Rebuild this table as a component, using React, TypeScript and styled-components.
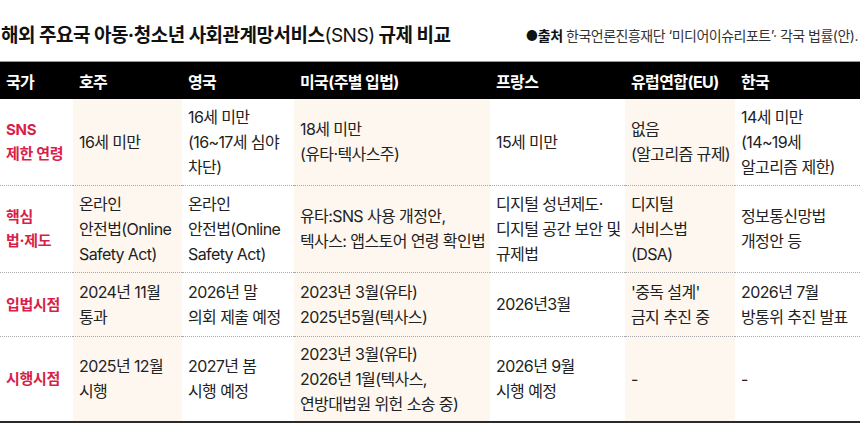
import React from "react";
import styled, { createGlobalStyle } from "styled-components";

const Global = createGlobalStyle`
  html, body { margin: 0; padding: 0; background: #ffffff; }
  body { font-family: Inter, "Noto Sans CJK KR", sans-serif; color: #222; }
`;

const Page = styled.div`
  width: 860px;
  height: 429px;
  overflow: hidden;
  background: #fff;
`;

const TitleBar = styled.div`
  height: 62px;
  display: flex;
  align-items: flex-end;
  justify-content: space-between;
  padding: 0 2px 13px 1px;
  box-sizing: border-box;
  border-bottom: 1px solid #9a9a9a;
`;

const Title = styled.h1`
  margin: 0;
  font-size: 19px;
  font-weight: 700;
  letter-spacing: -0.5px;
  line-height: 24px;
  color: #111;
`;

const Light = styled.span`
  font-weight: 400;
`;

const Source = styled.div`
  font-size: 14px;
  letter-spacing: -0.5px;
  line-height: 20px;
  color: #333;
  margin-bottom: 2px;
`;

const SourceLabel = styled.b`
  color: #111;
  font-weight: 700;
`;

const Grid = styled.div`
  display: grid;
  grid-template-columns: 73px 109px 112px 196px 135px 110px 125px;
  grid-template-rows: 37px 86px 87px 64px 85px;
  border-bottom: 2px solid #2a2a2a;
`;

const HeadCell = styled.div`
  background: #000;
  color: #fff;
  font-weight: 700;
  font-size: 16px;
  letter-spacing: -0.6px;
  display: flex;
  align-items: center;
  padding-left: 6px;
`;

const Cell = styled.div<{ $beige?: boolean; $first?: boolean }>`
  background: ${(p) => (p.$beige ? "#fdf7f0" : "#ffffff")};
  border-top: ${(p) => (p.$first ? "none" : "1px dotted #a8a8a8")};
  display: flex;
  align-items: center;
  padding-left: 6px;
  padding-right: 0;
  font-size: 16px;
  line-height: 25px;
  letter-spacing: -0.6px;
  color: #222;
  white-space: pre-line;
`;

const LabelCell = styled(Cell)`
  color: #d81e4a;
  font-weight: 700;
  font-size: 15px;
  letter-spacing: -0.3px;
  line-height: 24px;
  padding-left: 6px;
`;

const headers = ["국가", "호주", "영국", "미국(주별 입법)", "프랑스", "유럽연합(EU)", "한국"];

const rows: { label: string; cells: string[] }[] = [
  {
    label: "SNS\n제한 연령",
    cells: [
      "16세 미만",
      "16세 미만\n(16~17세 심야\n차단)",
      "18세 미만\n(유타·텍사스주)",
      "15세 미만",
      "없음\n(알고리즘 규제)",
      "14세 미만\n(14~19세\n알고리즘 제한)",
    ],
  },
  {
    label: "핵심\n법·제도",
    cells: [
      "온라인\n안전법(Online\nSafety Act)",
      "온라인\n안전법(Online\nSafety Act)",
      "유타:SNS 사용 개정안,\n텍사스: 앱스토어 연령 확인법",
      "디지털 성년제도·\n디지털 공간 보안 및\n규제법",
      "디지털\n서비스법\n(DSA)",
      "정보통신망법\n개정안 등",
    ],
  },
  {
    label: "입법시점",
    cells: [
      "2024년 11월\n통과",
      "2026년 말\n의회 제출 예정",
      "2023년 3월(유타)\n2025년5월(텍사스)",
      "2026년3월",
      "'중독 설계'\n금지 추진 중",
      "2026년 7월\n방통위 추진 발표",
    ],
  },
  {
    label: "시행시점",
    cells: [
      "2025년 12월\n시행",
      "2027년 봄\n시행 예정",
      "2023년 3월(유타)\n2026년 1월(텍사스,\n연방대법원 위헌 소송 중)",
      "2026년 9월\n시행 예정",
      "-",
      "-",
    ],
  },
];

export default function App() {
  return (
    <Page>
      <Global />
      <TitleBar>
        <Title>
          해외 주요국 아동·청소년 사회관계망서비스<Light>(SNS)</Light> 규제 비교
        </Title>
        <Source>
          <SourceLabel>●출처</SourceLabel> 한국언론진흥재단 ‘미디어이슈리포트’· 각국 법률(안).
        </Source>
      </TitleBar>
      <Grid>
        {headers.map((h) => (
          <HeadCell key={h}>{h}</HeadCell>
        ))}
        {rows.map((r, ri) => (
          <React.Fragment key={r.label}>
            <LabelCell $first={ri === 0}>{r.label}</LabelCell>
            {r.cells.map((c, ci) => (
              <Cell key={ci} $first={ri === 0} $beige={ci % 2 === 0}>
                {c}
              </Cell>
            ))}
          </React.Fragment>
        ))}
      </Grid>
    </Page>
  );
}
